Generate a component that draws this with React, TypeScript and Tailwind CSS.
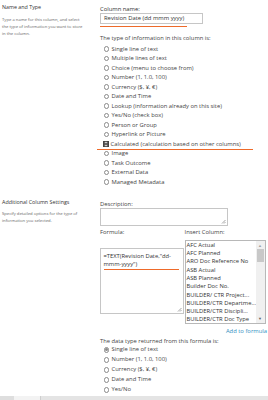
import React from 'react';

const TYPES = [
  'Single line of text',
  'Multiple lines of text',
  'Choice (menu to choose from)',
  'Number (1, 1.0, 100)',
  'Currency ($, ¥, €)',
  'Date and Time',
  'Lookup (information already on this site)',
  'Yes/No (check box)',
  'Person or Group',
  'Hyperlink or Picture',
  'Calculated (calculation based on other columns)',
  'Image',
  'Task Outcome',
  'External Data',
  'Managed Metadata',
];

const RETURN_TYPES = ['Single line of text', 'Number (1, 1.0, 100)', 'Currency ($, ¥, €)', 'Date and Time', 'Yes/No'];

const COLUMNS = [
  'AFC Actual',
  'AFC Planned',
  'ARO Doc Reference No',
  'ASB Actual',
  'ASB Planned',
  'Builder Doc No.',
  'BUILDER/ CTR Project...',
  'BUILDER/CTR Departme...',
  'BUILDER/CTR Discipli...',
  'BUILDER/CTR Doc Type',
];

const Radio = ({ checked, focused }: { checked?: boolean; focused?: boolean }) => (
  <span
    className={`flex h-[6.5px] w-[6.5px] shrink-0 items-center justify-center ${
      focused ? 'border-[0.5px] border-[#444]' : ''
    }`}
  >
    <span
      className={`flex h-[5.5px] w-[5.5px] items-center justify-center rounded-full border-[0.6px] ${
        focused ? 'border-[#555]' : 'border-[#8a8a8a]'
      } bg-white`}
    >
      {checked && <span className={`h-[2.6px] w-[2.6px] rounded-full ${focused ? 'bg-[#333]' : 'bg-[#8a8a8a]'}`} />}
    </span>
  </span>
);

const Grip = () => (
  <svg className="absolute bottom-[1px] right-[1px]" width="5" height="5" viewBox="0 0 5 5">
    <path d="M4.5 1 L1 4.5 M4.5 3 L3 4.5" stroke="#666" strokeWidth="0.6" />
  </svg>
);

const App: React.FC = () => {
  return (
    <div
      className="flex h-[400px] w-[268px] flex-col overflow-hidden bg-white text-[#444]"
      style={{ fontFamily: '"Open Sans", "Liberation Sans", sans-serif' }}
    >
      <div className="flex-1">
        {/* Name and Type */}
        <div className="flex">
          <div className="w-[100px] shrink-0 pl-[2px] pt-[3px]">
            <div className="text-[5.35px] leading-[8px] text-[#333]">Name and Type</div>
            <div className="mt-[5px] whitespace-nowrap text-[4.2px] leading-[7px] text-[#666]">
              Type a name for this column, and select
              <br />
              the type of information you want to store
              <br />
              in the column.
            </div>
          </div>
          <div className="flex-1 pt-[6px]">
            <div className="text-[5.85px] leading-[7px] text-[#333]">Column name:</div>
            <div className="flex h-[11px] w-[103px] items-center whitespace-nowrap border-[0.8px] border-[#c6c6c6] pl-[3px] text-[5.85px] text-[#333]">
              Revision Date (dd mmm yyyy)
            </div>
            <div className="mt-[1.5px] h-[1.5px] w-[87px] bg-[#ee6a2a]" />
            <div className="mt-[7px] whitespace-nowrap text-[5.8px] leading-[8px] text-[#444]">
              The type of information in this column is:
            </div>
            <div className="mt-[2.25px]">
              {TYPES.map((t, i) => (
                <div
                  key={t}
                  className={`relative flex h-[9.5px] items-center text-[5.85px] ${
                    i === 10 ? 'gap-[1.25px] pl-[2.75px]' : 'gap-[1.75px] pl-[3.25px]'
                  }`}
                >
                  <Radio checked={i === 10} focused={i === 10} />
                  <span className="whitespace-nowrap">{t}</span>
                  {i === 10 && <div className="absolute bottom-[-1.5px] left-[-3px] h-[1.5px] w-[156px] bg-[#ee6a2a]" />}
                </div>
              ))}
            </div>
          </div>
        </div>

        {/* Additional Column Settings */}
        <div className="flex">
          <div className="w-[100px] shrink-0 pl-[2px] pt-[11px]">
            <div className="text-[5.35px] leading-[8px] text-[#333]">Additional Column Settings</div>
            <div className="mt-[4px] whitespace-nowrap text-[4.2px] leading-[7.5px] text-[#666]">
              Specify detailed options for the type of
              <br />
              information you selected.
            </div>
          </div>
          <div className="flex-1 pt-[13px]">
            <div className="text-[5.85px] leading-[8px]">Description:</div>
            <div className="relative h-[18px] w-[128px] border-[0.8px] border-[#c6c6c6]">
              <Grip />
            </div>
            <div className="mt-[2px] flex gap-[1px]">
              <div>
                <div className="text-[5.85px] leading-[8px]">Formula:</div>
                <div className="relative mt-[12px] h-[66px] w-[83.5px] whitespace-nowrap border-[0.8px] border-[#c6c6c6] pl-[2.5px] pt-[3px] text-[5.8px] leading-[8px] text-[#333]">
                  <div>=TEXT(Revision Date,"dd-</div>
                  <div>mmm-yyyy")</div>
                  <div className="mt-[1px] h-[1.5px] w-[75px] bg-[#ee6a2a]" />
                  <Grip />
                </div>
              </div>
              <div>
                <div className="text-[5.85px] leading-[8px]">Insert Column:</div>
                <div className="mt-[4px] flex h-[84px] w-[81px] border-[0.8px] border-[#b8b8b8]">
                  <div className="flex-1 overflow-hidden pl-[1px]">
                    {COLUMNS.map((c) => (
                      <div key={c} className="h-[8.3px] whitespace-nowrap text-[5.8px] leading-[8.3px] text-[#333]">
                        {c}
                      </div>
                    ))}
                  </div>
                  <div className="flex w-[9px] flex-col items-center bg-[#f0f0f0]">
                    <div className="pt-[2px] text-[4px] leading-[5px] text-[#a0a0a0]">▲</div>
                    <div className="mt-[1px] h-[13px] w-[7px] bg-[#c8c8c8]" />
                    <div className="flex-1" />
                    <div className="pb-[2px] text-[4px] leading-[5px] text-[#606060]">▼</div>
                  </div>
                </div>
              </div>
            </div>
            <div className="mt-[3px] whitespace-nowrap pr-[1px] text-right text-[5.85px] leading-[8px] text-[#2f8fbf]">
              Add to formula
            </div>
            <div className="mt-[2px] whitespace-nowrap text-[5.8px] leading-[8px]">
              The data type returned from this formula is:
            </div>
            <div>
              {RETURN_TYPES.map((t, i) => (
                <div key={t} className="flex h-[10px] items-center gap-[1.75px] pl-[3.25px] text-[5.85px]">
                  <Radio checked={i === 0} />
                  <span className="whitespace-nowrap">{t}</span>
                </div>
              ))}
            </div>
          </div>
        </div>
      </div>

      {/* horizontal scrollbar strip */}
      <div className="flex h-[4px] shrink-0">
        <div className="w-[14px] bg-[#dedede]" />
        <div className="w-[26px] bg-[#f3f3f3]" />
        <div className="w-[1px] bg-[#cfcfcf]" />
        <div className="flex-1 bg-[#e4e4e4]" />
      </div>
    </div>
  );
};

export default App;
